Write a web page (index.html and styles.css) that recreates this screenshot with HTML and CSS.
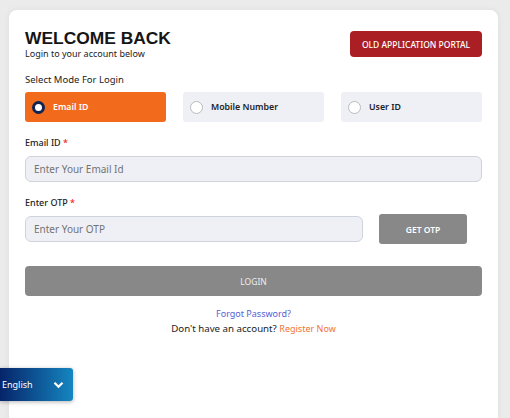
FILE: index.html
```html
<!DOCTYPE html>
<html lang="en">
<head>
  <meta charset="UTF-8">
  <meta name="viewport" content="width=device-width, initial-scale=1.0">
  <title>Login</title>
  <link rel="stylesheet" href="styles.css">
</head>
<body>
  <div class="login-card">
    <div class="login-head">
      <div>
        <h1>WELCOME BACK</h1>
        <p class="sub">Login to your account below</p>
      </div>
      <button class="old-portal-btn">OLD APPLICATION PORTAL</button>
    </div>

    <p class="mode-label">Select Mode For Login</p>
    <div class="mode-tabs">
      <label class="mode-tab active"><span class="radio"></span>Email ID</label>
      <label class="mode-tab"><span class="radio"></span>Mobile Number</label>
      <label class="mode-tab"><span class="radio"></span>User ID</label>
    </div>

    <div class="field">
      <label class="field-label">Email ID <span class="req">*</span></label>
      <input type="text" class="text-input" placeholder="Enter Your Email Id">
    </div>

    <div class="field">
      <label class="field-label">Enter OTP <span class="req">*</span></label>
      <div class="otp-row">
        <input type="text" class="text-input" placeholder="Enter Your OTP">
        <button class="otp-btn">GET OTP</button>
      </div>
    </div>

    <button class="login-btn">LOGIN</button>

    <div class="links">
      <a href="#" class="forgot">Forgot Password?</a>
      <p>Don't have an account? <a href="#" class="register">Register Now</a></p>
    </div>
  </div>

  <div class="lang-select">
    <span>English</span>
    <svg width="11" height="8" viewBox="0 0 11 8"><path d="M1.5 1.8 L5.5 5.8 L9.5 1.8" fill="none" stroke="#fff" stroke-width="2.2"/></svg>
  </div>
</body>
</html>
```

FILE: styles.css
```css
body {
  margin: 0;
  background-color: #ebebeb;
  font-family: "Noto Sans", sans-serif;
  color: #222;
  height: 418px;
  overflow: hidden;
}
.login-card {
  background: #fff;
  margin: 10px 12px 0 9px;
  border-radius: 8px;
  padding: 20px 16px 0 16px;
  height: 420px;
  box-shadow: 0 0 6px rgba(0, 0, 0, 0.06);
}
.login-head {
  display: flex;
  justify-content: space-between;
  align-items: flex-start;
}
h1 {
  font-family: "Liberation Sans", Arial, sans-serif;
  font-size: 17.4px;
  font-weight: bold;
  color: #151515;
  margin: 0;
  line-height: 17px;
}
.sub {
  margin: 0;
  font-size: 9px;
  line-height: 13px;
  color: #222;
}
.old-portal-btn {
  margin-top: 1px;
  background: #a91f24;
  color: #fff;
  border: none;
  border-radius: 4px;
  font-family: "Noto Sans", sans-serif;
  font-size: 8.5px;
  font-weight: 500;
  width: 132px;
  height: 26px;
}
.mode-label {
  margin: 13px 0 0 0;
  font-size: 9.5px;
  line-height: 13px;
}
.mode-tabs {
  display: flex;
  gap: 17px;
  margin-top: 6px;
}
.mode-tab {
  flex: 1;
  height: 30px;
  background: #eff0f5;
  border-radius: 3px;
  display: flex;
  align-items: center;
  font-size: 8.8px;
  font-weight: 600;
  padding-left: 7px;
}
.mode-tab.active {
  background: #f26a1b;
  color: #fff;
}
.radio {
  width: 11px;
  height: 11px;
  border: 1px solid #bbb;
  border-radius: 50%;
  background: #fff;
  margin-right: 8px;
}
.active .radio {
  width: 7px;
  height: 7px;
  border: 3px solid #0e2452;
  background: #fff;
}
.field {
  margin-top: 15px;
}
.field-label {
  display: block;
  font-size: 9px;
  font-weight: 500;
  line-height: 12px;
  margin-bottom: 7px;
}
.req {
  color: #e22;
}
.text-input {
  display: block;
  box-sizing: border-box;
  width: 100%;
  height: 26px;
  background: #eff0f5;
  border: 1px solid #cfd3dc;
  border-radius: 6px;
  padding: 0 8px;
  font-family: "Noto Sans", sans-serif;
  font-size: 10px;
}
.text-input::placeholder {
  color: #737373;
}
.otp-row {
  display: flex;
  align-items: center;
  gap: 16px;
  padding-right: 15px;
  margin-top: -2px;
}
.otp-row .text-input {
  flex: 1;
}
.otp-btn {
  width: 88px;
  height: 30px;
  background: #888;
  color: #fff;
  border: none;
  border-radius: 3px;
  font-family: "Noto Sans", sans-serif;
  font-size: 8.5px;
  font-weight: 600;
}
.login-btn {
  display: block;
  width: 100%;
  height: 30px;
  margin-top: 22px;
  background: #888;
  color: #eee;
  border: none;
  border-radius: 4px;
  font-family: "Noto Sans", sans-serif;
  font-size: 8.5px;
}
.links {
  text-align: center;
  margin-top: 11px;
  font-size: 9.7px;
}
.links p {
  margin: 2px 0 0 0;
  line-height: 14px;
}
.forgot {
  color: #5860d4;
  text-decoration: none;
  font-size: 9px;
  line-height: 13px;
}
.register {
  color: #f37433;
  text-decoration: none;
  font-size: 9px;
}
.lang-select {
  position: absolute;
  left: 0;
  top: 368px;
  width: 73px;
  height: 33px;
  box-sizing: border-box;
  padding: 0 9px 0 2px;
  display: flex;
  align-items: center;
  justify-content: space-between;
  background: linear-gradient(to right, #06246a, #1586c0);
  border-radius: 0 3px 3px 0;
  box-shadow: 0 1px 4px rgba(0, 0, 0, 0.3);
  color: #fff;
  font-size: 9px;
}
```
